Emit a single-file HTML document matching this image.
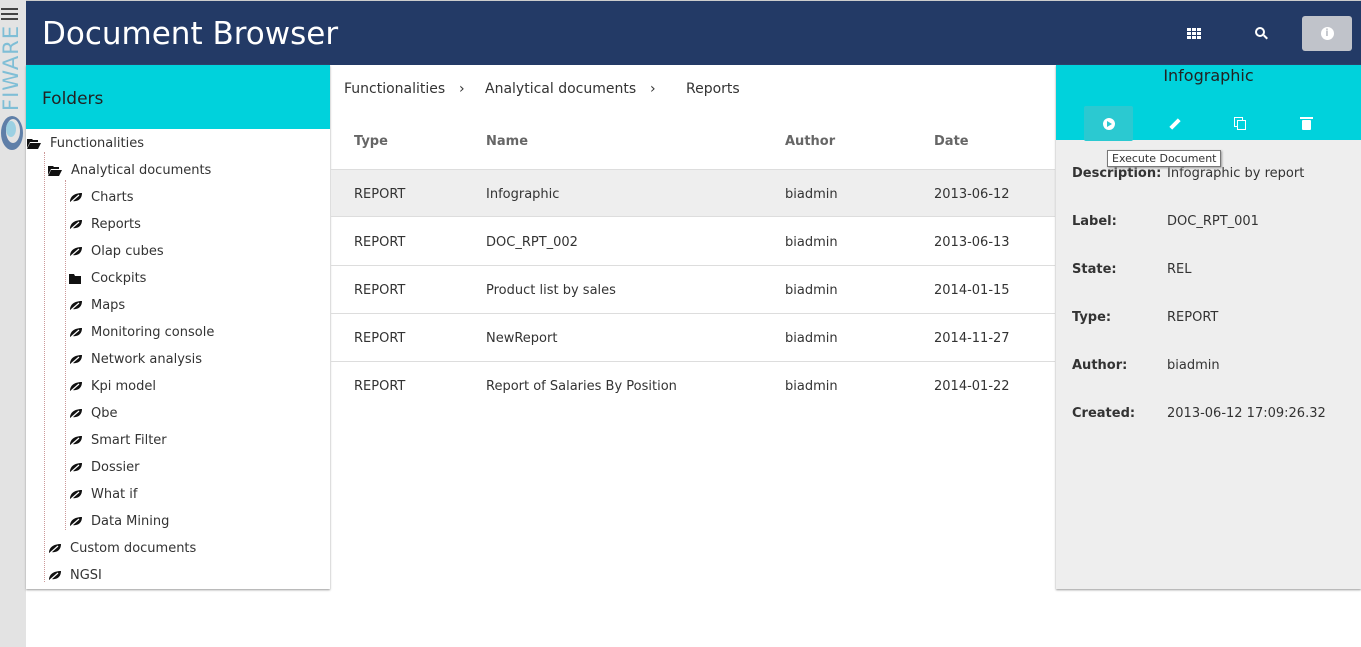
<!DOCTYPE html>
<html><head><meta charset="utf-8"><style>
*{margin:0;padding:0;box-sizing:border-box}
body{width:1361px;height:647px;overflow:hidden;background:#fff;font-family:"DejaVu Sans","Liberation Sans",sans-serif;font-size:13px;color:#333;position:relative}
.abs{position:absolute}
.strip{left:0;top:0;width:26px;height:647px;background:#e3e3e3}
.hdr{left:26px;top:0;width:1335px;height:65px;background:#233a66;border-top:1px solid #ccc}
.hdr h1{position:absolute;left:16px;top:15px;font-weight:normal;font-size:31px;color:#fff}
.fold{left:26px;top:65px;width:304px;height:524px;background:#fff;box-shadow:0 1px 2px #999}
.fh{height:64px;background:#00d2dc;font-size:17px;color:#222;padding:24px 16px}
.ti{position:absolute;font-size:13px;color:#333}
.ic{position:absolute}
.row{position:absolute;left:331px;width:724px;height:48px;border-bottom:1px solid #ddd}
.row span{position:absolute;top:17px}
.rp{left:1056px;top:65px;width:305px;height:524px;background:#eee;box-shadow:0 1px 2px #999}
.rph{height:75px;background:#00d2dc;text-align:center;font-size:16px;color:#222;padding-top:1px}
.kv{position:absolute;left:16px;font-size:13px}
.kv b{display:inline-block;width:95px}
</style></head><body>
<div class="abs strip">
<div class="abs" style="left:1px;top:8px;width:17px;height:2px;background:#444;box-shadow:0 5px 0 #444,0 10px 0 #444"></div>
<div class="abs" style="left:-24px;top:64px;width:70px;transform:rotate(-90deg);font-size:21px;color:#7fbed6;letter-spacing:1px">FIWARE</div>
<svg class="abs" style="left:0;top:114px" width="26" height="38"><ellipse cx="12" cy="19" rx="11" ry="17" fill="#5f7fa8"/><ellipse cx="13" cy="17" rx="7" ry="12" fill="#e3e3e3"/><ellipse cx="11" cy="15" rx="5" ry="8" fill="#9cd0e2"/></svg>
</div>
<div class="abs hdr"><h1>Document Browser</h1>
<div class="abs" style="left:1161px;top:27px;width:14px;height:11px;background:repeating-linear-gradient(90deg,#fff 0 4px,transparent 4px 5px);-webkit-mask:repeating-linear-gradient(#000 0 3px,transparent 3px 4px)"></div>
<div class="abs" style="left:1229px;top:26px;width:10px;height:10px;border:2px solid #fff;border-radius:50%"></div>
<div class="abs" style="left:1237px;top:35px;width:5px;height:2px;background:#fff;transform:rotate(45deg)"></div>
<div class="abs" style="left:1276px;top:15px;width:50px;height:35px;background:#c0c3ca;border-radius:3px"><div style="margin:11px auto;width:13px;height:13px;border-radius:50%;background:#fff;color:#c0c3ca;font-size:10px;font-weight:bold;text-align:center;line-height:13px">i</div></div>
</div>
<div class="abs fold"><div class="fh">Folders</div></div>
<div class="abs" style="left:44px;top:152px;height:430px;border-left:1px dotted #c99"></div>
<div class="abs" style="left:65px;top:180px;height:350px;border-left:1px dotted #c99"></div>
<svg class="ic" style="left:27px;top:138px" width="14" height="11"><path d="M0 1h5l1 1h5v2H3L0 10z M3 5h11l-3 6H0z" fill="#111"/></svg>
<div class="ti" style="left:50px;top:136px">Functionalities</div>
<svg class="ic" style="left:48px;top:165px" width="14" height="11"><path d="M0 1h5l1 1h5v2H3L0 10z M3 5h11l-3 6H0z" fill="#111"/></svg>
<div class="ti" style="left:71px;top:163px">Analytical documents</div>
<div id="tree"></div>
<div class="abs" style="left:331px;top:81px;font-size:14px;color:#333">
<span class="abs" style="left:13px;white-space:nowrap">Functionalities</span><span class="abs" style="left:128px">›</span>
<span class="abs" style="left:154px;white-space:nowrap">Analytical documents</span><span class="abs" style="left:319px">›</span>
<span class="abs" style="left:355px">Reports</span></div>
<div class="abs" style="top:134px;left:354px;font-weight:bold;color:#666">Type</div>
<div class="abs" style="top:134px;left:486px;font-weight:bold;color:#666">Name</div>
<div class="abs" style="top:134px;left:785px;font-weight:bold;color:#666">Author</div>
<div class="abs" style="top:134px;left:934px;font-weight:bold;color:#666">Date</div>
<div class="row" style="top:169px;background:#eee;border-top:1px solid #ddd"><span style="left:23px">REPORT</span><span style="left:155px">Infographic</span><span style="left:454px">biadmin</span><span style="left:603px">2013-06-12</span></div>
<div class="row" style="top:218px"><span style="left:23px">REPORT</span><span style="left:155px">DOC_RPT_002</span><span style="left:454px">biadmin</span><span style="left:603px">2013-06-13</span></div>
<div class="row" style="top:266px"><span style="left:23px">REPORT</span><span style="left:155px">Product list by sales</span><span style="left:454px">biadmin</span><span style="left:603px">2014-01-15</span></div>
<div class="row" style="top:314px"><span style="left:23px">REPORT</span><span style="left:155px">NewReport</span><span style="left:454px">biadmin</span><span style="left:603px">2014-11-27</span></div>
<div class="row" style="top:362px;border:none"><span style="left:23px">REPORT</span><span style="left:155px">Report of Salaries By Position</span><span style="left:454px">biadmin</span><span style="left:603px">2014-01-22</span></div>
<div class="abs rp"><div class="rph">Infographic</div>
<div class="kv" style="top:101px"><b>Description:</b>Infographic by report</div>
<div class="kv" style="top:149px"><b>Label:</b>DOC_RPT_001</div>
<div class="kv" style="top:197px"><b>State:</b>REL</div>
<div class="kv" style="top:245px"><b>Type:</b>REPORT</div>
<div class="kv" style="top:293px"><b>Author:</b>biadmin</div>
<div class="kv" style="top:341px"><b>Created:</b>2013-06-12 17:09:26.32</div>
</div>
<div class="abs" style="left:1084px;top:106px;width:49px;height:35px;background:#2bc9d1;border-radius:2px"></div>
<div class="abs" style="left:1103px;top:118px;width:12px;height:12px;border-radius:50%;background:#fff"></div>
<div class="abs" style="left:1107px;top:121px;border-left:5px solid #2bc9d1;border-top:3px solid transparent;border-bottom:3px solid transparent"></div>
<div class="abs" style="left:1169px;top:122px;width:12px;height:4px;background:#fff;transform:rotate(-45deg)"></div>
<div class="abs" style="left:1234px;top:117px;width:9px;height:10px;border:1.5px solid #fff"></div>
<div class="abs" style="left:1237px;top:120px;width:9px;height:10px;border:1.5px solid #fff;background:#00d2dc"></div>
<div class="abs" style="left:1302px;top:120px;width:9px;height:10px;background:#fff;border-radius:1px"></div>
<div class="abs" style="left:1300px;top:117px;width:13px;height:2px;background:#fff"></div>
<div class="abs" style="left:1107px;top:150px;padding:1px 4px;background:#fff;border:1px solid #777;font-size:11px;color:#333;box-shadow:1px 1px 2px #999">Execute Document</div>
<script>
var items=[["Charts",69],["Reports",69],["Olap cubes",69],["Cockpits",69,1],["Maps",69],["Monitoring console",69],["Network analysis",69],["Kpi model",69],["Qbe",69],["Smart Filter",69],["Dossier",69],["What if",69],["Data Mining",69],["Custom documents",48],["NGSI",48]];
var leaf='<svg width="14" height="11"><path d="M1 10C1 4 6 1 13 1C13 7 9 10 3 9Z" fill="#111"/><path d="M2 10L10 3" stroke="#fff" stroke-width="1.2"/></svg>';
var fold='<svg width="12" height="10"><path d="M0 0h5l1 2h6v8H0z" fill="#111"/></svg>';
var h="";items.forEach(function(it,i){var y=190+27*i;h+='<div class="ic" style="left:'+it[1]+'px;top:'+(y+2)+'px">'+(it[2]?fold:leaf)+'</div><div class="ti" style="left:'+(it[1]+22)+'px;top:'+y+'px">'+it[0]+'</div>';});
document.getElementById("tree").innerHTML=h;
</script>
</body></html>
